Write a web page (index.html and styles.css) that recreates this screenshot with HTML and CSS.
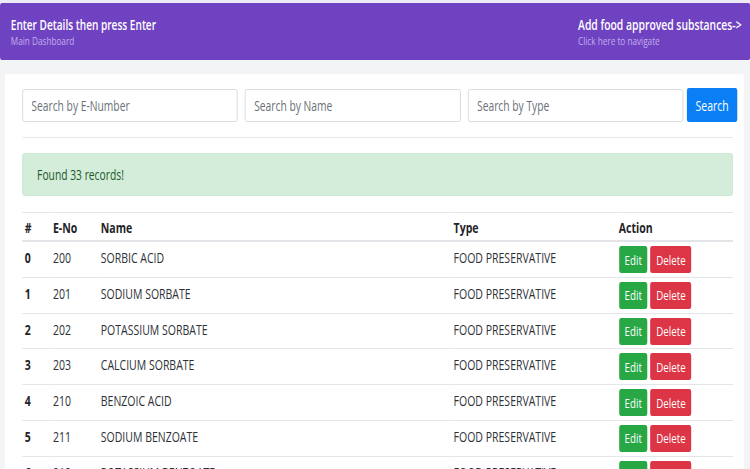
FILE: index.html
```html
<!DOCTYPE html>
<html lang="en">
<head>
<meta charset="utf-8">
<title>Main Dashboard</title>
<link rel="stylesheet" href="styles.css">
</head>
<body>
<div class="viewport">
<div class="page">
  <header class="topbar">
    <div class="topbar-block">
      <div class="topbar-title">Enter Details then press Enter</div>
      <div class="topbar-sub">Main Dashboard</div>
    </div>
    <a class="topbar-block topbar-link" href="#">
      <div class="topbar-title">Add food approved substances-&gt;</div>
      <div class="topbar-sub">Click here to navigate</div>
    </a>
  </header>
  <main class="card">
    <form class="search-row">
      <input class="field" type="text" placeholder="Search by E-Number">
      <input class="field" type="text" placeholder="Search by Name">
      <input class="field" type="text" placeholder="Search by Type">
      <button class="btn btn-primary" type="button">Search</button>
    </form>
    <hr class="divider">
    <div class="alert">Found 33 records!</div>
    <table class="table">
      <colgroup>
        <col class="c-idx"><col class="c-eno"><col class="c-name"><col class="c-type"><col class="c-act">
      </colgroup>
      <thead>
        <tr><th>#</th><th>E-No</th><th>Name</th><th>Type</th><th>Action</th></tr>
      </thead>
      <tbody>
        <tr><td class="idx">0</td><td>200</td><td>SORBIC ACID</td><td>FOOD PRESERVATIVE</td><td class="act"><button class="btn btn-sm btn-success">Edit</button><button class="btn btn-sm btn-danger">Delete</button></td></tr>
        <tr><td class="idx">1</td><td>201</td><td>SODIUM SORBATE</td><td>FOOD PRESERVATIVE</td><td class="act"><button class="btn btn-sm btn-success">Edit</button><button class="btn btn-sm btn-danger">Delete</button></td></tr>
        <tr><td class="idx">2</td><td>202</td><td>POTASSIUM SORBATE</td><td>FOOD PRESERVATIVE</td><td class="act"><button class="btn btn-sm btn-success">Edit</button><button class="btn btn-sm btn-danger">Delete</button></td></tr>
        <tr><td class="idx">3</td><td>203</td><td>CALCIUM SORBATE</td><td>FOOD PRESERVATIVE</td><td class="act"><button class="btn btn-sm btn-success">Edit</button><button class="btn btn-sm btn-danger">Delete</button></td></tr>
        <tr><td class="idx">4</td><td>210</td><td>BENZOIC ACID</td><td>FOOD PRESERVATIVE</td><td class="act"><button class="btn btn-sm btn-success">Edit</button><button class="btn btn-sm btn-danger">Delete</button></td></tr>
        <tr><td class="idx">5</td><td>211</td><td>SODIUM BENZOATE</td><td>FOOD PRESERVATIVE</td><td class="act"><button class="btn btn-sm btn-success">Edit</button><button class="btn btn-sm btn-danger">Delete</button></td></tr>
        <tr><td class="idx">6</td><td>212</td><td>POTASSIUM BENZOATE</td><td>FOOD PRESERVATIVE</td><td class="act"><button class="btn btn-sm btn-success">Edit</button><button class="btn btn-sm btn-danger">Delete</button></td></tr>
      </tbody>
    </table>
  </main>
</div>
</div>
</body>
</html>
```

FILE: styles.css
```css
html, body {
  margin: 0;
  padding: 0;
  overflow: hidden;
  height: 100%;
}
body {
  background: #f3f4f6;
  font-family: "Open Sans", "Noto Sans", "Liberation Sans", sans-serif;
  color: #25292d;
}
.viewport {
  width: 750px;
  height: 469px;
  overflow: hidden;
}
/* the reference is a horizontally condensed capture; lay out at full width and condense */
.page {
  width: 1042px;
  transform: scaleX(0.72);
  transform-origin: 0 0;
  padding-top: 3px;
  background: linear-gradient(#efeaf7 0 3px, transparent 3px);
}
.topbar {
  display: flex;
  justify-content: space-between;
  align-items: flex-start;
  background: #6f42c1;
  border-radius: 3px;
  height: 57px;
  box-sizing: border-box;
  padding: 13px 12px 0 15px;
}
.topbar-block {
  display: flex;
  flex-direction: column;
  text-decoration: none;
}
.topbar-title {
  color: #ffffff;
  font-weight: 600;
  font-size: 14px;
  line-height: 18px;
}
.topbar-link .topbar-title {
  font-size: 14.4px;
}
.topbar-sub {
  color: #c3aeec;
  font-size: 11.4px;
  line-height: 14px;
}
.card {
  background: #ffffff;
  margin: 14px 9px 0 7px;
  padding: 14px 15px 0 23.5px;
  min-height: 420px;
}
.search-row {
  display: flex;
  align-items: flex-end;
  gap: 10px;
  margin: 0 -6px 0 0;
}
.field {
  flex: 1;
  min-width: 0;
  height: 33px;
  box-sizing: border-box;
  border: 1px solid #d4d7db;
  border-radius: 3px;
  padding: 0 12px;
  font-family: inherit;
  font-size: 14.3px;
  color: #495057;
  background: #fff;
  outline: none;
}
.field::placeholder {
  color: #6a7077;
}
.btn {
  border: 0;
  font-family: inherit;
  color: #fff;
  cursor: pointer;
}
.btn-primary {
  background: #0a7ff5;
  width: 70px;
  height: 34px;
  border-radius: 3px;
  font-size: 14.5px;
  margin-left: -5px;
  padding: 0;
}
.divider {
  border: 0;
  border-top: 1px solid #e6e8ea;
  margin: 15px 0 15px 0;
}
.alert {
  background: #d4edda;
  border: 1px solid #c6e7ce;
  border-radius: 3px;
  color: #1d5a2a;
  font-size: 14.3px;
  height: 43px;
  box-sizing: border-box;
  padding: 0 20px;
  display: flex;
  align-items: center;
}
.table {
  width: 100%;
  border-collapse: collapse;
  margin-top: 16px;
  font-size: 14.6px;
  table-layout: fixed;
}
.c-idx { width: 39px; }
.c-eno { width: 66.5px; }
.c-name { width: 490px; }
.c-type { width: 229.5px; }
.c-act { width: auto; }
.table th {
  text-align: left;
  font-weight: 700;
  color: #1f2327;
  padding: 4px 4px 3px;
  line-height: 20px;
  border-top: 1px solid #e3e5e8;
  border-bottom: 2px solid #e1e3e6;
}
.table td {
  padding: 5px 4px 3.8px;
  line-height: 20px;
  vertical-align: top;
  border-top: 1px solid #e3e5e8;
  color: #2d3136;
  white-space: nowrap;
}
.table td.idx {
  font-weight: 700;
  color: #1f2327;
}
.btn-sm {
  height: 27px;
  margin-top: -1px;
  padding: 0 8px;
  border-radius: 3px;
  font-size: 13.5px;
  vertical-align: top;
}
.btn-sm + .btn-sm {
  margin-left: 4px;
}
.btn-success {
  background: #28a745;
}
.btn-danger {
  background: #dc3545;
}
```
